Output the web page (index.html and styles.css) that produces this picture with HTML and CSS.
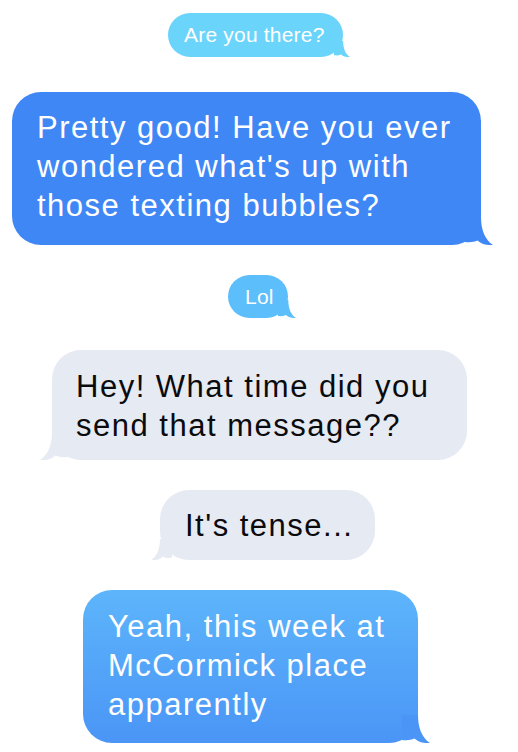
FILE: index.html
```html
<!DOCTYPE html>
<html lang="en">
<head>
<meta charset="utf-8">
<title>Messages</title>
<link rel="stylesheet" href="styles.css">
</head>
<body>
<div class="thread">
  <div class="bubble small out cyan b1">Are you there?<svg class="tail" viewBox="0 0 28 28" aria-hidden="true"><path d="M0 0H16C16 13 20 23 28 28C21 28.6 15.5 26.5 12.5 23.5C9 25.2 5 25.5 0 25Z"/></svg></div>
  <div class="bubble big out blue b2">Pretty good! Have you ever<br>wondered what's up with<br>those texting bubbles?<svg class="tail" viewBox="0 0 28 28" aria-hidden="true"><path d="M0 0H16C16 13 20 23 28 28C21 28.6 15.5 26.5 12.5 23.5C9 25.2 5 25.5 0 25Z"/></svg></div>
  <div class="bubble small out sky b3">Lol<svg class="tail" viewBox="0 0 28 28" aria-hidden="true"><path d="M0 0H16C16 13 20 23 28 28C21 28.6 15.5 26.5 12.5 23.5C9 25.2 5 25.5 0 25Z"/></svg></div>
  <div class="bubble big in grey b4">Hey! What time did you<br>send that message??<svg class="tail" viewBox="0 0 28 28" aria-hidden="true"><path d="M0 0H16C16 13 20 23 28 28C21 28.6 15.5 26.5 12.5 23.5C9 25.2 5 25.5 0 25Z"/></svg></div>
  <div class="bubble big in grey b5">It's tense...<svg class="tail" viewBox="0 0 28 28" aria-hidden="true"><path d="M0 0H16C16 13 20 23 28 28C21 28.6 15.5 26.5 12.5 23.5C9 25.2 5 25.5 0 25Z"/></svg></div>
  <div class="bubble big out grad b6">Yeah, this week at<br>McCormick place<br>apparently<svg class="tail" viewBox="0 0 28 28" aria-hidden="true"><path d="M0 0H16C16 13 20 23 28 28C21 28.6 15.5 26.5 12.5 23.5C9 25.2 5 25.5 0 25Z"/></svg></div>
</div>
</body>
</html>
```

FILE: styles.css
```css
* { box-sizing: border-box; }
html, body { margin: 0; padding: 0; background: #fff; }
body { width: 518px; height: 752px; overflow: hidden; }

.thread {
  display: flex;
  flex-direction: column;
  align-items: flex-start;
  padding-top: 13px;
  font-family: "Liberation Sans", Arial, Helvetica, sans-serif;
}

.bubble {
  position: relative;
  z-index: 0;
  white-space: nowrap;
}

.small {
  font-size: 21px;
  line-height: 24px;
  letter-spacing: 0.2px;
  border-radius: 22px;
}

.big {
  font-size: 31px;
  line-height: 39px;
  letter-spacing: 1.5px;
  border-radius: 29px;
}

/* tails */
.tail {
  position: absolute;
  bottom: 0;
  z-index: -1;
  display: block;
  width: 28px;
  height: 28px;
  fill: var(--tail);
}
.out .tail { right: -12px; }
.in .tail { left: -12px; transform: scaleX(-1); }

.small .tail { width: 16px; height: 16px; right: -7px; }
.b3 .tail { width: 18px; height: 18px; right: -8px; }
.b5 .tail { width: 21px; height: 21px; left: -9px; }

/* colours */
.cyan { background: #6bd4fb; color: #fff; --tail: #6bd4fb; }
.blue { background: #3f87f5; color: #fff; --tail: #3f87f5; }
.sky { background: #5cbefb; color: #fff; --tail: #5cbefb; }
.grey { background: #e6eaf3; color: #0b0b0d; --tail: #e6eaf3; }
.grad { background: linear-gradient(#5db5fb, #4a95f6); color: #fff; --tail: #4a95f6; }

/* individual bubbles */
.b1 { margin-left: 168px; width: 175px; padding: 10px 0 10px 16px; }
.b2 { margin-top: 35px; margin-left: 12px; width: 469px; padding: 16px 0 20px 25px; }
.b3 { margin-top: 30px; margin-left: 228px; width: 60px; padding: 10px 0 9px 17px; }
.b4 { margin-top: 32px; margin-left: 52px; width: 415px; padding: 17px 0 15px 24px; }
.b5 { margin-top: 30px; margin-left: 160px; width: 215px; padding: 16px 0 15px 25px; }
.b6 { margin-top: 30px; margin-left: 83px; width: 335px; padding: 17px 0 19px 25px; }
```
